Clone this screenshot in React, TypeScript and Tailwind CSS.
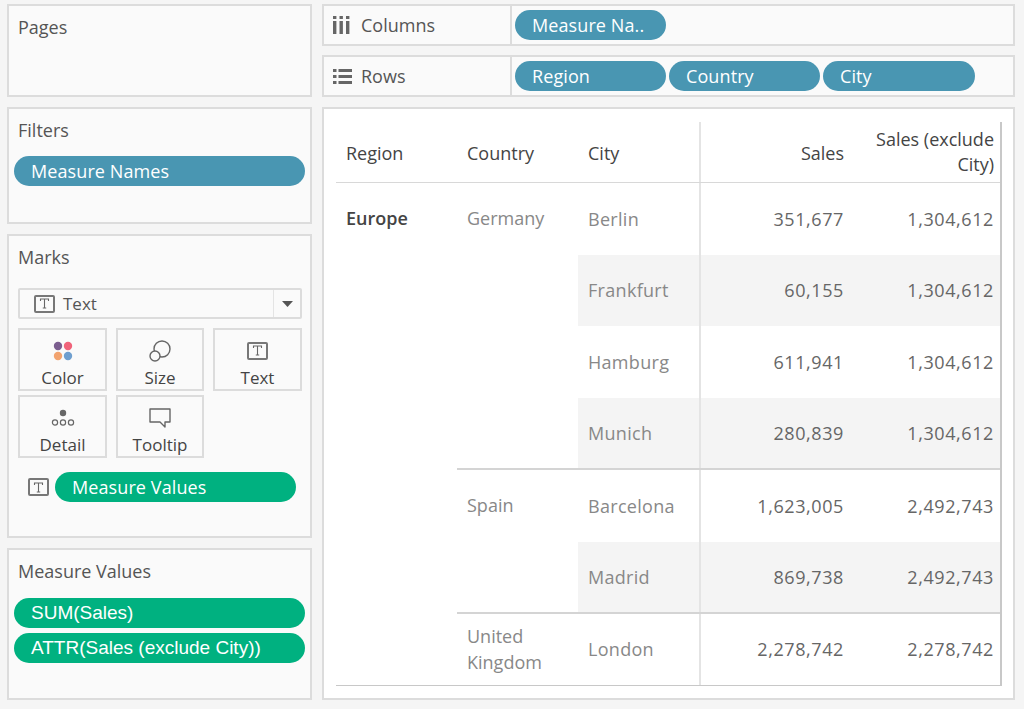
import React from 'react';

const TextIcon = ({ size = 'w-[21px] h-[18px]' }: { size?: string }) => (
  <span className={`${size} border-2 border-[#777] rounded-[2px] flex items-center justify-center shrink-0`}>
    <svg width="11" height="11" viewBox="0 0 11 11" fill="none" stroke="#666" strokeWidth="1.1">
      <path d="M1.5 3V1h8v2M5.5 1v9M3.8 10h3.4" />
    </svg>
  </span>
);

const Pill = ({ label, color, width, arial }: { label: string; color: 'blue' | 'green'; width: string; arial?: boolean }) => (
  <div
    className={`${width} h-[30px] rounded-full pl-[17px] pb-px flex items-center leading-none text-white whitespace-nowrap shrink-0 ${
      color === 'blue' ? 'bg-[#4996b2]' : 'bg-[#00b180]'
    } ${arial ? "text-[19px] font-['Liberation_Sans',sans-serif]" : 'text-[18px] tracking-[0.1px]'}`}
  >
    {label}
  </div>
);

const Panel = ({ title, height, children }: { title: string; height: string; children?: React.ReactNode }) => (
  <div className={`${height} border-2 border-[#dcdcdc] bg-[#fafafa] pt-[8px] flex flex-col`}>
    <div className="pl-[9px] text-[18px] leading-[26px] text-[#555]">{title}</div>
    {children}
  </div>
);

const MarkCard = ({ label, width, children }: { label: string; width: string; children: React.ReactNode }) => (
  <div className={`${width} h-[63px] border-2 border-[#dcdcdc] flex flex-col items-center text-[#444]`}>
    <div className="h-[38px] flex items-center justify-center pt-1">{children}</div>
    <div className="text-[17px] leading-[22px]">{label}</div>
  </div>
);

const Shelf = ({ label, icon, children }: { label: string; icon: React.ReactNode; children: React.ReactNode }) => (
  <div className="h-[42px] border-2 border-[#dcdcdc] bg-[#fafafa] flex">
    <div className="w-[188px] border-r-2 border-[#dcdcdc] flex items-center">
      <div className="w-[37px] pl-[9px] shrink-0">{icon}</div>
      <span className="text-[18px] text-[#555]">{label}</span>
    </div>
    <div className="flex items-center gap-[3px] pl-[3px]">{children}</div>
  </div>
);

type Row = { city: string; sales: string; excl: string; height: string; shaded: boolean };

const germany: Row[] = [
  { city: 'Berlin', sales: '351,677', excl: '1,304,612', height: 'h-[72px]', shaded: false },
  { city: 'Frankfurt', sales: '60,155', excl: '1,304,612', height: 'h-[71px]', shaded: true },
  { city: 'Hamburg', sales: '611,941', excl: '1,304,612', height: 'h-[72px]', shaded: false },
  { city: 'Munich', sales: '280,839', excl: '1,304,612', height: 'h-[70px]', shaded: true },
];
const spain: Row[] = [
  { city: 'Barcelona', sales: '1,623,005', excl: '2,492,743', height: 'h-[72px]', shaded: false },
  { city: 'Madrid', sales: '869,738', excl: '2,492,743', height: 'h-[70px]', shaded: true },
];
const uk: Row[] = [
  { city: 'London', sales: '2,278,742', excl: '2,278,742', height: 'h-[71px]', shaded: false },
];

const Rows = ({ rows }: { rows: Row[] }) => (
  <div className="flex-1">
    {rows.map((r) => (
      <div key={r.city} className={`${r.height} flex items-center text-[18px] ${r.shaded ? 'bg-[#f4f4f4]' : ''}`}>
        <div className="w-[123px] h-full border-r-2 border-[#e4e4e4] pl-[10px] flex items-center tracking-[0.3px] text-[#888]">{r.city}</div>
        <div className="w-[143px] text-right tracking-[0.6px] text-[#666]">{r.sales}</div>
        <div className="w-[150px] text-right tracking-[0.6px] text-[#666]">{r.excl}</div>
      </div>
    ))}
  </div>
);

const CountryGroup = ({ name, rows, last }: { name: React.ReactNode; rows: Row[]; last?: boolean }) => (
  <div className={`flex ${last ? '' : 'border-b-2 border-[#d4d4d4]'}`}>
    <div className="w-[121px] pl-[10px] h-[70px] flex items-center text-[18px] leading-[26px] text-[#888] shrink-0">{name}</div>
    <Rows rows={rows} />
  </div>
);

export default function App() {
  return (
    <div className="w-[1024px] h-[709px] bg-[#f5f5f5] flex gap-[10px] pl-[7px] pt-1 overflow-hidden font-['Open_Sans',sans-serif]">
      <div className="w-[305px] flex flex-col gap-[10px] shrink-0">
        <Panel title="Pages" height="h-[93px]" />
        <Panel title="Filters" height="h-[117px]">
          <div className="mt-[13px] ml-[5px]">
            <Pill label="Measure Names" color="blue" width="w-[291px]" />
          </div>
        </Panel>
        <Panel title="Marks" height="h-[304px]">
          <div className="ml-[9px] mt-[18px] w-[284px] h-[31px] border-2 border-[#dcdcdc] rounded-[2px] flex items-center">
            <div className="flex-1 flex items-center gap-2 pl-[14px] text-[17px] text-[#555]">
              <TextIcon />
              Text
            </div>
            <div className="w-[27px] h-full border-l border-[#e4e4e4] flex items-center justify-center">
              <svg width="11" height="6" viewBox="0 0 11 6">
                <path d="M0 0h11L5.5 6z" fill="#555" />
              </svg>
            </div>
          </div>
          <div className="ml-[9px] mt-[9px] flex gap-[9px]">
            <MarkCard label="Color" width="w-[89px]">
              <svg width="20" height="20" viewBox="0 0 20 20">
                <circle cx="5" cy="5" r="4.2" fill="#7b5e8f" />
                <circle cx="15" cy="5" r="4.2" fill="#f0637a" />
                <circle cx="5" cy="15" r="4.2" fill="#f2a36f" />
                <circle cx="15" cy="15" r="4.2" fill="#6f9fcf" />
              </svg>
            </MarkCard>
            <MarkCard label="Size" width="w-[88px]">
              <svg width="22" height="22" viewBox="0 0 22 22" fill="none" stroke="#666" strokeWidth="1.4">
                <circle cx="13" cy="9" r="8" />
                <circle cx="6" cy="16" r="5" fill="#fafafa" />
              </svg>
            </MarkCard>
            <MarkCard label="Text" width="w-[89px]">
              <TextIcon />
            </MarkCard>
          </div>
          <div className="ml-[9px] mt-[4px] flex gap-[9px]">
            <MarkCard label="Detail" width="w-[89px]">
              <svg width="26" height="20" viewBox="0 0 26 20" fill="none" stroke="#666" strokeWidth="1.2">
                <circle cx="13" cy="5" r="3.2" fill="#666" stroke="none" />
                <circle cx="5" cy="14.5" r="2.6" />
                <circle cx="13" cy="14.5" r="2.6" />
                <circle cx="21" cy="14.5" r="2.6" />
              </svg>
            </MarkCard>
            <MarkCard label="Tooltip" width="w-[88px]">
              <svg width="22" height="20" viewBox="0 0 22 20" fill="none" stroke="#666" strokeWidth="1.4">
                <path d="M1 1h20v13h-5v5l-5-5H1z" strokeLinejoin="round" />
              </svg>
            </MarkCard>
          </div>
          <div className="mt-[14px] ml-[19px] flex items-center gap-[6px]">
            <TextIcon />
            <Pill label="Measure Values" color="green" width="w-[241px]" />
          </div>
        </Panel>
        <Panel title="Measure Values" height="h-[152px]">
          <div className="mt-[14px] flex flex-col gap-[5px] ml-[5px]">
            <Pill label="SUM(Sales)" color="green" width="w-[291px]" arial />
            <Pill label="ATTR(Sales (exclude City))" color="green" width="w-[291px]" arial />
          </div>
        </Panel>
      </div>

      <div className="w-[693px] flex flex-col gap-[9px] shrink-0">
        <Shelf
          label="Columns"
          icon={
            <svg width="17" height="18" viewBox="0 0 17 18" fill="#666">
              <rect x="0" y="0" width="3.4" height="3" />
              <rect x="6.5" y="0" width="3.4" height="3" />
              <rect x="13" y="0" width="3.4" height="3" />
              <rect x="0" y="5" width="3.4" height="13" />
              <rect x="6.5" y="5" width="3.4" height="13" />
              <rect x="13" y="5" width="3.4" height="13" />
            </svg>
          }
        >
          <Pill label="Measure Na.." color="blue" width="w-[151px]" />
        </Shelf>
        <Shelf
          label="Rows"
          icon={
            <svg width="19" height="15" viewBox="0 0 19 15" fill="#666">
              <rect x="0" y="0" width="3.5" height="3" />
              <rect x="5.5" y="0" width="13.5" height="3" />
              <rect x="0" y="6" width="3.5" height="3" />
              <rect x="5.5" y="6" width="13.5" height="3" />
              <rect x="0" y="12" width="3.5" height="3" />
              <rect x="5.5" y="12" width="13.5" height="3" />
            </svg>
          }
        >
          <Pill label="Region" color="blue" width="w-[151px]" />
          <Pill label="Country" color="blue" width="w-[151px]" />
          <Pill label="City" color="blue" width="w-[152px]" />
        </Shelf>

        <div className="h-[593px] mt-px border-2 border-[#dcdcdc] bg-white pl-[12px] pt-[13px]">
          <div className="w-[666px] border-r-2 border-[#c8c8c8] border-b border-b-[#c8c8c8]">
            <div className="h-[61px] flex border-b border-[#d8d8d8] text-[18px] font-medium leading-[25px] text-[#444]">
              <div className="w-[121px] pl-[10px] pt-[2px] flex items-center">Region</div>
              <div className="w-[121px] pl-[10px] pt-[2px] flex items-center">Country</div>
              <div className="w-[123px] pl-[10px] pt-[2px] flex items-center border-r-2 border-[#e4e4e4]">City</div>
              <div className="w-[143px] pt-[2px] flex items-center justify-end">Sales</div>
              <div className="w-[150px] flex items-center justify-end text-right">
                Sales (exclude
                <br />
                City)
              </div>
            </div>
            <div className="flex">
              <div className="w-[121px] pl-[10px] h-[70px] flex items-center text-[18px] font-semibold text-[#444] shrink-0">Europe</div>
              <div className="flex-1">
                <CountryGroup name="Germany" rows={germany} />
                <CountryGroup name="Spain" rows={spain} />
                <CountryGroup
                  name={
                    <span>
                      United
                      <br />
                      Kingdom
                    </span>
                  }
                  rows={uk}
                  last
                />
              </div>
            </div>
          </div>
        </div>
      </div>
    </div>
  );
}
